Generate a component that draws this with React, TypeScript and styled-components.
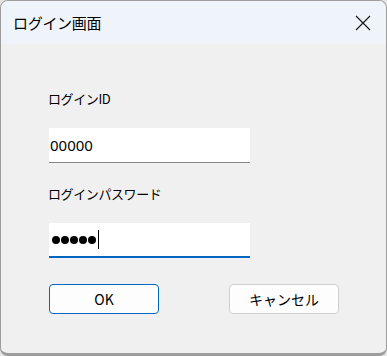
import React from 'react';
import styled, { createGlobalStyle } from 'styled-components';

const GlobalStyle = createGlobalStyle`
  html, body {
    margin: 0;
    padding: 0;
    background: #e4e4e4;
  }
  body {
    font-family: "Noto Sans CJK JP", "Noto Sans", sans-serif;
  }
`;

const Window = styled.div`
  box-sizing: border-box;
  width: 387px;
  height: 356px;
  border: 1px solid #9c9c9c;
  border-bottom-width: 3px;
  border-radius: 8px;
  overflow: hidden;
  background: #f0f0f0;
  display: flex;
  flex-direction: column;
`;

const TitleBar = styled.div`
  height: 43px;
  flex-shrink: 0;
  background: #eff4fa;
  display: flex;
  align-items: center;
  justify-content: space-between;
  padding: 0 11px 0 12px;
`;

const Title = styled.span`
  font-size: 15px;
  color: #000;
  letter-spacing: -0.3px;
`;

const CloseButton = styled.div`
  width: 24px;
  height: 24px;
  display: flex;
  align-items: center;
  justify-content: center;
`;

const Body = styled.div`
  flex: 1;
  padding: 46px 0 0 47px;
  display: flex;
  flex-direction: column;
`;

const Label = styled.div`
  font-size: 13px;
  line-height: 18px;
  color: #000;
  letter-spacing: -0.4px;
`;

const Field = styled.div<{ $focused?: boolean }>`
  box-sizing: border-box;
  margin-top: 20px;
  margin-left: 1px;
  width: 201px;
  height: 35px;
  background: #fff;
  border-bottom: ${(p) => (p.$focused ? '2px solid #0067c0' : '1px solid #868686')};
  display: flex;
  align-items: center;
  padding-left: 1px;
  font-family: "Noto Sans", sans-serif;
  font-size: 15px;
  color: #000;
`;

const Dots = styled.span`
  display: flex;
  gap: 1px;
  margin-left: 2px;
`;

const Dot = styled.span`
  width: 8px;
  height: 8px;
  border-radius: 50%;
  background: #000;
`;

const Caret = styled.span`
  display: inline-block;
  width: 1px;
  height: 19px;
  background: #000;
  margin-left: 2px;
`;

const Group = styled.div<{ $gap: number }>`
  margin-top: ${(p) => p.$gap}px;
`;

const ButtonRow = styled.div`
  display: flex;
  gap: 70px;
  margin-top: 26px;
  margin-left: 1px;
`;

const Button = styled.div<{ $primary?: boolean }>`
  box-sizing: border-box;
  width: 110px;
  height: 30px;
  background: #fdfdfd;
  border: 1px solid ${(p) => (p.$primary ? '#0067c0' : '#d0d0d0')};
  border-radius: 4px;
  display: flex;
  align-items: center;
  justify-content: center;
  font-size: 14px;
  color: #000;
`;

export default function App() {
  return (
    <>
      <GlobalStyle />
      <Window>
        <TitleBar>
          <Title>ログイン画面</Title>
          <CloseButton>
            <svg width="16" height="16" viewBox="0 0 16 16">
              <path d="M1 1L15 15M15 1L1 15" stroke="#1a1a1a" strokeWidth="1.2" fill="none" />
            </svg>
          </CloseButton>
        </TitleBar>
        <Body>
          <Label>ログインID</Label>
          <Field>00000</Field>
          <Group $gap={22}>
            <Label>ログインパスワード</Label>
            <Field $focused>
              <Dots>
                {[0, 1, 2, 3, 4].map((i) => (
                  <Dot key={i} />
                ))}
              </Dots>
              <Caret />
            </Field>
          </Group>
          <ButtonRow>
            <Button $primary>OK</Button>
            <Button>キャンセル</Button>
          </ButtonRow>
        </Body>
      </Window>
    </>
  );
}
